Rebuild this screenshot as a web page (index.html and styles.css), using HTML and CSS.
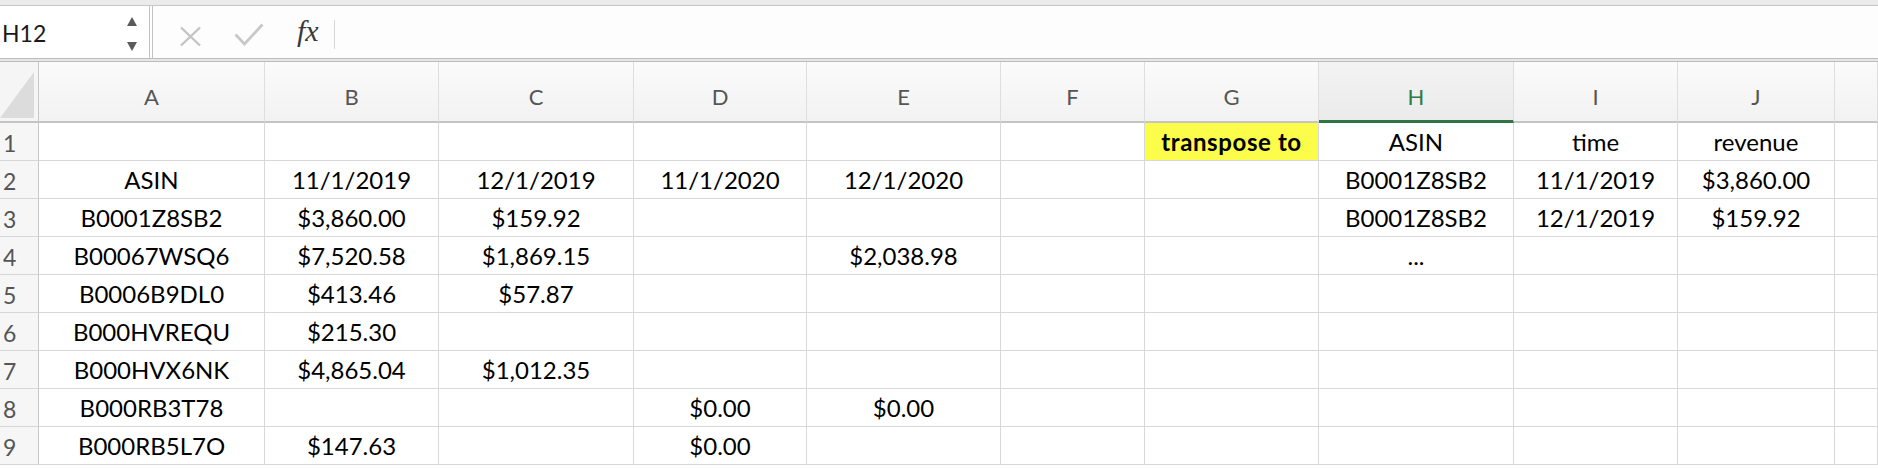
FILE: index.html
```html
<!DOCTYPE html>
<html lang="en">
<head>
<meta charset="utf-8">
<title>Sheet</title>
<link rel="stylesheet" href="styles.css">
</head>
<body>
<div class="app">
  <div class="topstrip"></div>
  <div class="fbar">
    <div class="namebox">
      <span class="ref">H12</span>
      <svg class="spin" width="12" height="36" viewBox="0 0 12 36">
        <polygon points="1,10 11,10 6,1" fill="#5a5a5a"/>
        <polygon points="1,26 11,26 6,35" fill="#5a5a5a"/>
      </svg>
    </div>
    <div class="fbtns">
      <svg class="ico-x" width="23" height="21" viewBox="0 0 23 21">
        <path d="M2 1.5 L21 19.5 M21 1.5 L2 19.5" stroke="#c4c4c4" stroke-width="2.4" fill="none"/>
      </svg>
      <svg class="ico-ok" width="30" height="23" viewBox="0 0 30 23">
        <path d="M1.5 11.5 L10.5 21 L28.5 1.5" stroke="#c8c8c8" stroke-width="2.8" fill="none"/>
      </svg>
      <span class="fx">fx</span>
      <span class="fsep"></span>
    </div>
    <div class="finput"></div>
  </div>
  <div class="divider"></div>
  <div class="sheet">
    <div class="corner">
      <svg width="34" height="46" viewBox="0 0 34 46"><polygon points="0,46 34,0 34,46" fill="#dcdcdc"/></svg>
    </div>
    <div class="ch">A</div><div class="ch">B</div><div class="ch">C</div><div class="ch">D</div><div class="ch">E</div><div class="ch">F</div><div class="ch">G</div><div class="ch sel">H</div><div class="ch">I</div><div class="ch">J</div><div class="ch"></div>

    <div class="rh">1</div>
    <div class="c"></div><div class="c"></div><div class="c"></div><div class="c"></div><div class="c"></div><div class="c"></div>
    <div class="c hl">transpose to</div><div class="c">ASIN</div><div class="c">time</div><div class="c">revenue</div><div class="c"></div>

    <div class="rh">2</div>
    <div class="c">ASIN</div><div class="c">11/1/2019</div><div class="c">12/1/2019</div><div class="c">11/1/2020</div><div class="c">12/1/2020</div><div class="c"></div>
    <div class="c"></div><div class="c">B0001Z8SB2</div><div class="c">11/1/2019</div><div class="c">$3,860.00</div><div class="c"></div>

    <div class="rh">3</div>
    <div class="c">B0001Z8SB2</div><div class="c">$3,860.00</div><div class="c">$159.92</div><div class="c"></div><div class="c"></div><div class="c"></div>
    <div class="c"></div><div class="c">B0001Z8SB2</div><div class="c">12/1/2019</div><div class="c">$159.92</div><div class="c"></div>

    <div class="rh">4</div>
    <div class="c">B00067WSQ6</div><div class="c">$7,520.58</div><div class="c">$1,869.15</div><div class="c"></div><div class="c">$2,038.98</div><div class="c"></div>
    <div class="c"></div><div class="c">...</div><div class="c"></div><div class="c"></div><div class="c"></div>

    <div class="rh">5</div>
    <div class="c">B0006B9DL0</div><div class="c">$413.46</div><div class="c">$57.87</div><div class="c"></div><div class="c"></div><div class="c"></div>
    <div class="c"></div><div class="c"></div><div class="c"></div><div class="c"></div><div class="c"></div>

    <div class="rh">6</div>
    <div class="c">B000HVREQU</div><div class="c">$215.30</div><div class="c"></div><div class="c"></div><div class="c"></div><div class="c"></div>
    <div class="c"></div><div class="c"></div><div class="c"></div><div class="c"></div><div class="c"></div>

    <div class="rh">7</div>
    <div class="c">B000HVX6NK</div><div class="c">$4,865.04</div><div class="c">$1,012.35</div><div class="c"></div><div class="c"></div><div class="c"></div>
    <div class="c"></div><div class="c"></div><div class="c"></div><div class="c"></div><div class="c"></div>

    <div class="rh">8</div>
    <div class="c">B000RB3T78</div><div class="c"></div><div class="c"></div><div class="c">$0.00</div><div class="c">$0.00</div><div class="c"></div>
    <div class="c"></div><div class="c"></div><div class="c"></div><div class="c"></div><div class="c"></div>

    <div class="rh">9</div>
    <div class="c">B000RB5L7O</div><div class="c">$147.63</div><div class="c"></div><div class="c">$0.00</div><div class="c"></div><div class="c"></div>
    <div class="c"></div><div class="c"></div><div class="c"></div><div class="c"></div><div class="c"></div>
  </div>
</div>
</body>
</html>
```
FILE: styles.css
```css
* { box-sizing: border-box; }
html, body {
  margin: 0;
  padding: 0;
  background: #ffffff;
}
body {
  width: 1878px;
  height: 468px;
  overflow: hidden;
  font-family: Lato, "Open Sans", sans-serif;
}
.app {
  display: flex;
  flex-direction: column;
  width: 1878px;
}
.topstrip {
  height: 6px;
  background: #ebebeb;
  border-bottom: 1px solid #c6c6c6;
}
.fbar {
  height: 52px;
  display: flex;
  background: #fdfdfd;
}
.namebox {
  width: 150px;
  border-right: 1px solid #c2c2c2;
  display: flex;
  align-items: center;
  justify-content: space-between;
  padding: 0 11px 0 2px;
  background: #ffffff;
}
.ref {
  font-size: 23px;
  color: #1a1a1a;
  padding-top: 1px;
}
.spin { display: block; margin-top: 4px; }
.fbtns {
  margin-left: 2px;
  border-left: 1px solid #c2c2c2;
  display: flex;
  align-items: center;
  height: 100%;
}
.ico-x { margin-left: 26px; margin-top: 8px; }
.ico-ok { margin-left: 32px; margin-top: 5px; }
.fx {
  margin-left: 33px;
  font-family: "Liberation Serif", "DejaVu Serif", serif;
  font-style: italic;
  font-size: 30px;
  color: #3a3a3a;
  margin-top: -2px;
}
.fsep {
  margin-left: 15px;
  width: 1px;
  height: 29px;
  background: #d6d6d6;
  margin-top: 4px;
}
.finput { flex: 1; }
.divider {
  height: 4px;
  border-top: 1px solid #bdbdbd;
  border-bottom: 1px solid #bdbdbd;
  background: #e6e6e6;
}
.sheet {
  display: grid;
  grid-template-columns: 39px 226px 174px 195px 173px 194px 144px 174px 195px 164px 157px 1fr;
  grid-template-rows: 61px repeat(9, 38px);
}
.corner {
  background: #f5f5f5;
  border-right: 1px solid #c8c8c8;
  border-bottom: 2px solid #c4c4c4;
  display: flex;
  align-items: flex-end;
  padding-bottom: 3px;
}
.corner svg { display: block; }
.ch {
  background: linear-gradient(#fbfbfb, #f2f2f2);
  border-right: 1px solid #dedede;
  border-bottom: 2px solid #c4c4c4;
  display: flex;
  align-items: center;
  justify-content: center;
  padding-top: 9px;
  font-size: 22px;
  color: #555555;
}
.ch.sel {
  background: linear-gradient(#f3f3f3, #ebebeb);
  border-bottom: 3px solid #2f7445;
  color: #2f7a4b;
  padding-top: 10px;
}
.rh {
  background: #f6f6f6;
  border-right: 1px solid #c8c8c8;
  border-bottom: 1px solid #d6d6d6;
  display: flex;
  align-items: center;
  padding-left: 3px;
  padding-top: 2px;
  font-size: 23px;
  color: #555555;
}
.c {
  border-right: 1px solid #d8d8d8;
  border-bottom: 1px solid #d8d8d8;
  display: flex;
  align-items: center;
  justify-content: center;
  font-size: 24px;
  color: #000000;
  white-space: nowrap;
  overflow: hidden;
}
.c.hl {
  background: #fcfc4a;
  font-weight: 700;
  letter-spacing: 0.6px;
  color: #000;
}
```
